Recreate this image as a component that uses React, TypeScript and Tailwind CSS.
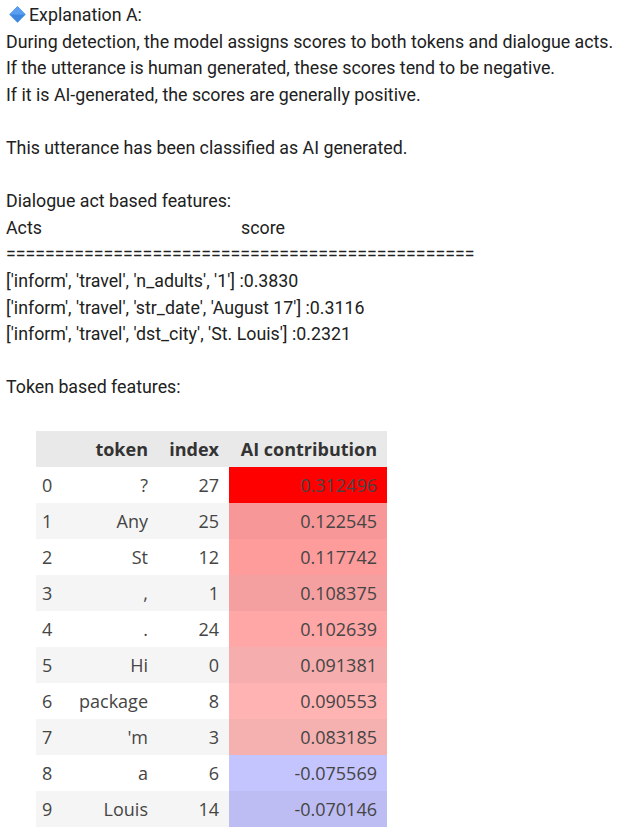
const rows = [
  { i: 0, token: "?", index: 27, val: "0.312496", bg: "bg-[#ff0000]" },
  { i: 1, token: "Any", index: 25, val: "0.122545", bg: "bg-[#f79797]" },
  { i: 2, token: "St", index: 12, val: "0.117742", bg: "bg-[#fe9b9b]" },
  { i: 3, token: ",", index: 1, val: "0.108375", bg: "bg-[#f5a0a0]" },
  { i: 4, token: ".", index: 24, val: "0.102639", bg: "bg-[#ffa6a6]" },
  { i: 5, token: "Hi", index: 0, val: "0.091381", bg: "bg-[#f5adad]" },
  { i: 6, token: "package", index: 8, val: "0.090553", bg: "bg-[#ffb3b3]" },
  { i: 7, token: "'m", index: 3, val: "0.083185", bg: "bg-[#f5b0b0]" },
  { i: 8, token: "a", index: 6, val: "-0.075569", bg: "bg-[#c4c4ff]" },
  { i: 9, token: "Louis", index: 14, val: "-0.070146", bg: "bg-[#bdbdf4]" },
];

function Diamond() {
  return (
    <svg width="17" height="17" viewBox="0 0 16 16" className="inline-block mr-[3px] -mt-[3px] align-middle">
      <path d="M8 0.3 L15.7 8 L8 15.7 L0.3 8 Z" fill="#3d86e0" />
      <path d="M8 0.3 L15.7 8 L8 8 L0.3 8 Z" fill="#5a9ef0" />
    </svg>
  );
}

function Blank() {
  return <div className="h-[26.6px]" />;
}

export default function App() {
  return (
    <div className="bg-white min-h-[840px] pl-[6px] pt-[2px] text-[17.8px] leading-[26.6px] text-[#212121] font-['Roboto',sans-serif] whitespace-nowrap">
      <div className="pl-[3px]">
        <Diamond />Explanation A:
      </div>
      <div>During detection, the model assigns scores to both tokens and dialogue acts.</div>
      <div>If the utterance is human generated, these scores tend to be negative.</div>
      <div>If it is AI-generated, the scores are generally positive.</div>
      <Blank />
      <div>This utterance has been classified as AI generated.</div>
      <Blank />
      <div>Dialogue act based features:</div>
      <div>
        <span className="inline-block w-[235px]">Acts</span>score
      </div>
      <div>================================================</div>
      <div>['inform', 'travel', 'n_adults', '1'] :0.3830</div>
      <div>['inform', 'travel', 'str_date', 'August 17'] :0.3116</div>
      <div>['inform', 'travel', 'dst_city', 'St. Louis'] :0.2321</div>
      <Blank />
      <div>Token based features:</div>

      <table className="mt-[30px] ml-[30px] border-collapse font-['Open_Sans',sans-serif] text-[18px] leading-none text-[#454545]">
        <thead>
          <tr className="bg-[#e9e9e9] h-[36px] text-[#333] font-bold">
            <th className="w-[30px]" />
            <th className="w-[92px] text-right pr-[10px]">token</th>
            <th className="w-[71px] text-right pr-[10px]">index</th>
            <th className="w-[158px] text-right pr-[10px]">AI contribution</th>
          </tr>
        </thead>
        <tbody>
          {rows.map((r) => (
            <tr key={r.i} className={`h-[36px] ${r.i % 2 === 1 ? "bg-[#f5f5f5]" : "bg-white"}`}>
              <td className="text-left pl-[6px]">{r.i}</td>
              <td className="text-right pr-[10px]">{r.token}</td>
              <td className="text-right pr-[10px]">{r.index}</td>
              <td className={`text-right pr-[10px] ${r.bg}`}>{r.val}</td>
            </tr>
          ))}
        </tbody>
      </table>
    </div>
  );
}
